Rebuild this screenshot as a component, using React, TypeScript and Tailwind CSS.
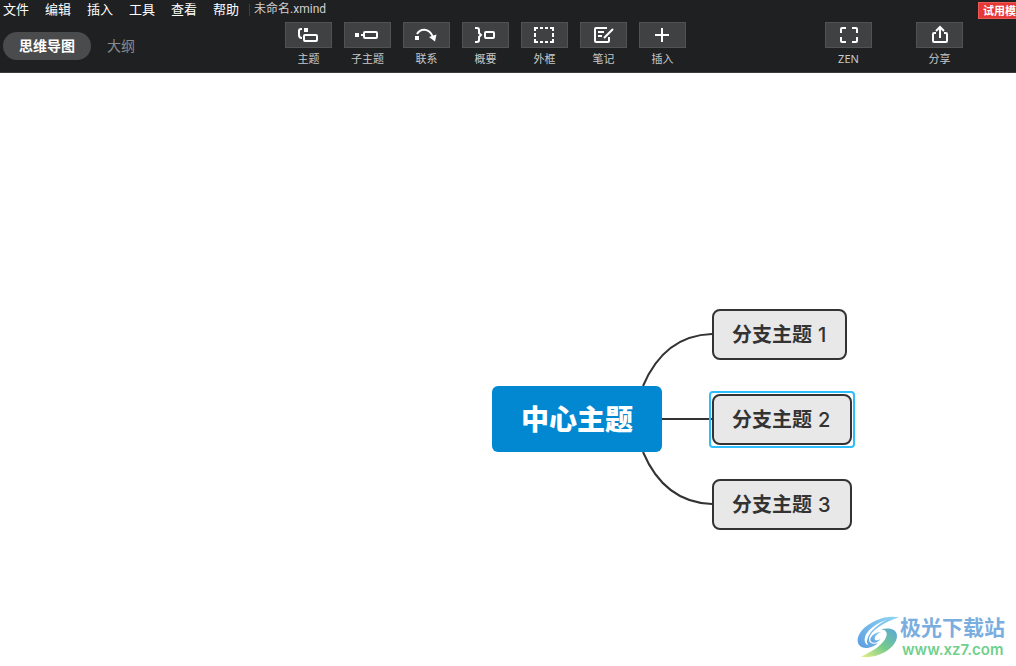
import React from 'react';

const menus = ['文件', '编辑', '插入', '工具', '查看', '帮助'];

const tools = [
    { label: '主题', icon: <TopicIcon /> },
    { label: '子主题', icon: <SubtopicIcon /> },
    { label: '联系', icon: <RelationIcon /> },
    { label: '概要', icon: <SummaryIcon /> },
    { label: '外框', icon: <BoundaryIcon /> },
    { label: '笔记', icon: <NoteIcon /> },
    { label: '插入', icon: <InsertIcon /> },
];

export default function App() {
    return (
        <div className="flex min-h-screen flex-col bg-white font-['Noto_Sans','Noto_Sans_CJK_SC',sans-serif]">
            <header className="border-b border-[#3a3a3c] bg-[#1e2022]">
                {/* Menu bar */}
                <div className="flex h-[22px] items-start">
                    <nav className="flex h-[18px] items-center gap-4 pl-[3px]">
                        {menus.map((menu) => (
                            <button key={menu} className="text-[13px] leading-[18px] text-white">
                                {menu}
                            </button>
                        ))}
                    </nav>
                    <div className="mt-1 ml-2.5 h-3 w-px bg-[#3c3e40]" />
                    <span className="ml-1 font-['Roboto','Noto_Sans_CJK_SC',sans-serif] text-[12px] leading-[18px] text-[#d0d0d0]">
                        未命名.xmind
                    </span>
                    <button className="mt-0.5 ml-auto h-[17px] w-[38px] overflow-hidden border border-r-0 border-[#ee5a55] bg-[#e53935] pl-1 text-left text-[11px] leading-[16px] font-bold whitespace-nowrap text-white">
                        试用模式
                    </button>
                </div>

                {/* Toolbar */}
                <div className="flex h-[50px] items-start">
                    <div className="flex w-[285px] shrink-0 items-center pt-2.5 pl-[3px]">
                        <button className="h-7 w-[88px] rounded-full bg-[#4a4b4d] text-[14px] leading-[26px] font-bold text-white">
                            思维导图
                        </button>
                        <button className="ml-4 text-[14px] leading-[26px] text-[#8a8b8d]">大纲</button>
                    </div>
                    <div className="flex gap-3">
                        {tools.map((tool) => (
                            <ToolButton key={tool.label} label={tool.label} icon={tool.icon} />
                        ))}
                    </div>
                    <div className="mr-[53px] ml-auto flex gap-11">
                        <ToolButton label="ZEN" icon={<ZenIcon />} />
                        <ToolButton label="分享" icon={<ShareIcon />} />
                    </div>
                </div>
            </header>

            <main className="relative min-h-[480px] flex-1 overflow-hidden">
                <svg className="absolute top-0 left-0" width="1016" height="593" fill="none" stroke="#333" strokeWidth="2">
                    <path d="M643 313C657 280 680 262 712 261" />
                    <path d="M662 346H712" />
                    <path d="M643 379C657 412 680 430 712 431" />
                </svg>

                <div className="absolute top-[313px] left-[492px] flex h-[66px] w-[170px] items-center justify-center rounded-md bg-[#0288d1] text-[28px] font-black text-white">
                    中心主题
                </div>
                <Branch className="top-[236px] w-[135px]" title="分支主题" index={1} />
                <div className="absolute top-[318px] left-[709px] h-[57px] w-[146px] rounded border-2 border-[#2ebdff]" />
                <Branch className="top-[321px] w-[140px]" title="分支主题" index={2} />
                <Branch className="top-[406px] w-[140px]" title="分支主题" index={3} />

                <Watermark />
            </main>
        </div>
    );
}

function ToolButton({ label, icon }: { label: string; icon: React.ReactNode }) {
    return (
        <button className="flex w-[47px] flex-col items-center text-[11px] leading-[16px] text-[#c8c8c8]">
            <span className="flex h-[26px] w-full items-center justify-center border border-[#515254] bg-[#404143] text-white">
                {icon}
            </span>
            <span className="mt-[3px]">{label}</span>
        </button>
    );
}

function Branch({ className, title, index }: { className: string; title: string; index: number }) {
    return (
        <div className={`absolute left-[712px] flex h-[51px] items-center gap-1.5 rounded-lg border-2 border-[#333] bg-[#e8e8e8] pl-[18px] text-[20px] font-bold text-[#333] ${className}`}>
            <span>{title}</span>
            <span className="font-[Inter] font-medium">{index}</span>
        </div>
    );
}

function Icon({ children }: { children: React.ReactNode }) {
    return (
        <svg className="overflow-visible" width="23" height="20" viewBox="0 0 23 20" fill="none" stroke="currentColor" strokeWidth="2">
            {children}
        </svg>
    );
}

function TopicIcon() {
    return (
        <Icon>
            <path d="M5 4H4Q2 4 2 6V10Q2 13 5 13" />
            <rect x="7" y="3" width="4" height="4" fill="currentColor" stroke="none" />
            <rect x="7" y="10" width="13" height="6" rx="1" />
        </Icon>
    );
}

function SubtopicIcon() {
    return (
        <Icon>
            <rect x="-1" y="8" width="4" height="4" fill="currentColor" stroke="none" />
            <path d="M5 10H8" />
            <rect x="8" y="7" width="13" height="6" rx="1" />
        </Icon>
    );
}

function RelationIcon() {
    return (
        <Icon>
            <rect x="0" y="11" width="4" height="4" fill="currentColor" stroke="none" />
            <path d="M2 9C5 3.500 14 2 18 12" />
            <path d="M14 12L21.500 9.500L20 16.500Z" fill="currentColor" stroke="none" />
        </Icon>
    );
}

function SummaryIcon() {
    return (
        <Icon>
            <path d="M1 3H3Q5 3 5 5V8L7 10L5 12V15Q5 17 3 17H1" />
            <rect x="11" y="7" width="9" height="6" rx="1" />
        </Icon>
    );
}

function BoundaryIcon() {
    return (
        <Icon>
            <path d="M2 6V3H5M7 3H10M12 3H15M17 3H20V6M20 8V12M20 14V17H17M15 17H12M10 17H7M5 17H2V14M2 12V8" />
        </Icon>
    );
}

function NoteIcon() {
    return (
        <Icon>
            <path d="M15 3H4Q3 3 3 4V16Q3 17 4 17H16Q17 17 17 16V12" />
            <path d="M6 7H12M6 11H10M12 13L21 4" />
        </Icon>
    );
}

function InsertIcon() {
    return (
        <Icon>
            <path d="M11 3V17M4 10H18" />
        </Icon>
    );
}

function ZenIcon() {
    return (
        <Icon>
            <path d="M9 3H5Q4 3 4 4V8M15 3H19Q20 3 20 4V8M20 12V16Q20 17 19 17H15M9 17H5Q4 17 4 16V12" />
        </Icon>
    );
}

function ShareIcon() {
    return (
        <Icon>
            <path d="M8 8H6Q5 8 5 9V16Q5 17 6 17H18Q19 17 19 16V9Q19 8 18 8H16" />
            <path d="M12 13V3M8 6L12 2L16 6" />
        </Icon>
    );
}

function Watermark() {
    return (
        <a href="#" className="absolute right-[11px] bottom-1.5 flex items-center font-bold">
            <svg className="overflow-visible" width="43" height="42" viewBox="0 0 129 126">
                <defs>
                    <linearGradient id="sky" x1="0" y1="1" x2="1" y2="0">
                        <stop offset="0" stopColor="#5c9de0" />
                        <stop offset="1" stopColor="#8fd6f4" />
                    </linearGradient>
                    <linearGradient id="leaf" x1="0" y1="1" x2="1" y2="0">
                        <stop offset="0" stopColor="#e6ef86" />
                        <stop offset="0.5" stopColor="#74ca8c" />
                        <stop offset="1" stopColor="#5aa6dc" />
                    </linearGradient>
                </defs>
                {/* outer crescent with the curl at its foot */}
                <path d="M126 4C108 0 82 2 58 13C22 29 0 54 2 76C4 92 18 98 35 95C46 93 56 88 62 82C48 86 36 82 36 70C36 58 48 44 66 32C82 21 104 11 126 4Z" fill="url(#sky)" />
                <path d="M92 10C58 22 26 44 23 68C22 78 26 86 34 88C30 84 29 77 31 70C36 48 62 26 92 10Z" fill="#fff" />
                <path d="M40 71C42 58 56 48 72 48C60 54 53 61 53 68C53 74 62 74 70 69C66 80 42 86 40 71Z" fill="url(#sky)" />
                {/* green sweep */}
                <path d="M12 122C30 126 60 122 84 108C110 92 124 70 119 53C115 40 96 34 72 40C90 42 94 54 84 70C72 90 44 108 12 122Z" fill="url(#leaf)" />
            </svg>
            <span className="flex flex-col">
                <span className="text-[21px] leading-[26px] text-[#7aaedf]">极光下载站</span>
                <span className="pl-0.5 font-[Inter] text-[15px] leading-[20px] font-semibold text-[#6fd08c]">www.xz7.com</span>
            </span>
        </a>
    );
}
